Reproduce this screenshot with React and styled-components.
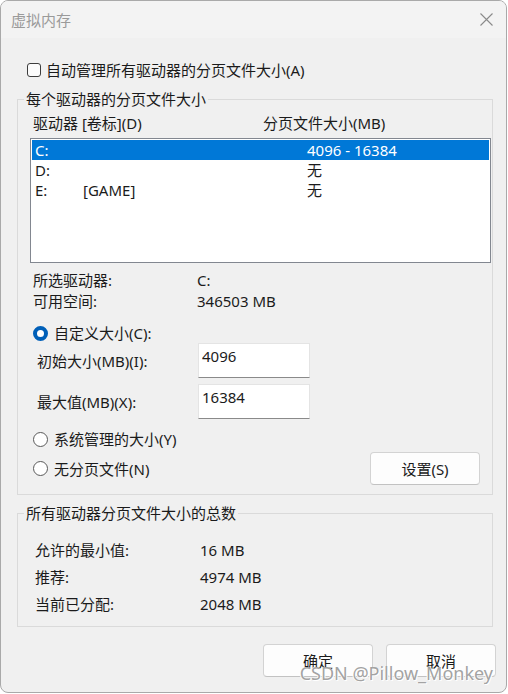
import React, { useState } from "react";
import styled, { createGlobalStyle } from "styled-components";

const GlobalStyle = createGlobalStyle`
  html, body {
    margin: 0;
    padding: 0;
    background: #ffffff;
  }
  body {
    font-family: "Noto Sans", "Noto Sans CJK SC", sans-serif;
    font-size: 15px;
    color: #1b1b1b;
  }
`;

const Window = styled.div`
  position: relative;
  box-sizing: border-box;
  width: 507px;
  height: 693px;
  border: 1px solid #a9a9a9;
  border-radius: 8px;
  background: #f0f0f0;
  overflow: hidden;
`;

const TitleBar = styled.div`
  height: 37px;
  display: flex;
  align-items: center;
  justify-content: space-between;
  padding: 0 13px 0 10px;
  background: #f3f3f3;
  color: #9a9a9a;
  line-height: 20px;
`;

const Body = styled.div`
  padding: 0 13px 0 16px;
`;

const CheckRow = styled.label`
  display: flex;
  align-items: center;
  gap: 5px;
  height: 20px;
  margin-top: 22px;
  padding-left: 10px;
  line-height: 20px;
`;

const CheckBox = styled.span`
  box-sizing: border-box;
  width: 14px;
  height: 14px;
  border: 1px solid #3c3c3c;
  border-radius: 3px;
  background: #fbfbfb;
`;

const Group = styled.fieldset`
  margin: ${(p) => p.$top}px 0 0 0;
  padding: 0 0 ${(p) => p.$bottom}px 0;
  border: 1px solid #dadada;
  min-width: 0;
`;

const Legend = styled.legend`
  margin-left: 6px;
  padding: 0 2px;
  line-height: 20px;
`;

const HeaderRow = styled.div`
  display: grid;
  grid-template-columns: 230px 1fr;
  height: 20px;
  line-height: 20px;
  margin-top: 4px;
  padding-left: 15px;
`;

const ListBox = styled.div`
  box-sizing: border-box;
  width: 461px;
  height: 125px;
  margin: 5px 0 0 12px;
  padding: 1px;
  border: 1px solid #828790;
  background: #ffffff;
`;

const ListRow = styled.div`
  display: grid;
  grid-template-columns: 48px 224px 1fr;
  height: 20px;
  line-height: 20px;
  padding-left: 3px;
  background: ${(p) => (p.$selected ? "#0078d7" : "transparent")};
  color: ${(p) => (p.$selected ? "#ffffff" : "#1b1b1b")};
`;

const InfoRow = styled.div`
  display: grid;
  grid-template-columns: ${(p) => p.$label}px 1fr;
  height: ${(p) => p.$h || 20}px;
  align-items: center;
  line-height: 20px;
  padding-left: ${(p) => p.$indent}px;
  margin-top: ${(p) => p.$top || 0}px;
`;

const RadioRow = styled.div`
  display: flex;
  align-items: center;
  justify-content: space-between;
  height: ${(p) => p.$h || 20}px;
  margin-top: ${(p) => p.$top || 0}px;
  padding: 0 12px 0 15px;
  line-height: 20px;
`;

const RadioLabel = styled.label`
  display: flex;
  align-items: center;
  gap: 6px;
`;

const Radio = styled.span`
  box-sizing: border-box;
  width: 15px;
  height: 15px;
  border-radius: 50%;
  border: ${(p) => (p.$on ? "4px solid #005fb8" : "1px solid #5a5a5a")};
  background: #ffffff;
`;

const FieldRow = styled.div`
  display: grid;
  grid-template-columns: 161px 112px;
  align-items: center;
  height: 35px;
  margin-top: ${(p) => p.$top || 0}px;
  padding-left: 19px;
  line-height: 20px;
`;

const Input = styled.input`
  box-sizing: border-box;
  width: 112px;
  height: 35px;
  padding: 0 3px 10px;
  border: 1px solid #e4e4e4;
  border-bottom-color: #8a8a8a;
  background: #ffffff;
  font: inherit;
  color: #1b1b1b;
  line-height: 20px;
  outline: none;
`;

const Button = styled.button`
  box-sizing: border-box;
  width: ${(p) => p.$w || 110}px;
  height: 33px;
  border: 1px solid #d3d3d3;
  border-bottom-color: #c2c2c2;
  border-radius: 4px;
  background: #fdfdfd;
  font: inherit;
  color: #1b1b1b;
  line-height: 20px;
  padding: 0;
`;

const Footer = styled.div`
  display: flex;
  justify-content: flex-end;
  gap: 13px;
  margin: 17px -3px 0 0;
`;

const Watermark = styled.div`
  position: absolute;
  right: 13px;
  bottom: 7px;
  font-family: "Noto Sans", sans-serif;
  font-size: 18px;
  line-height: 24px;
  color: #a3a3a3;
  text-shadow: 1px 1px 0 #ffffff, -1px 0 0 #ffffff;
  pointer-events: none;
`;

const CloseIcon = () => (
  <svg width="13" height="13" viewBox="0 0 13 13">
    <path d="M0.5 0.5 L12.5 12.5 M12.5 0.5 L0.5 12.5" stroke="#8a8a8a" strokeWidth="1.1" />
  </svg>
);

const drives = [
  { drive: "C:", label: "", size: "4096 - 16384" },
  { drive: "D:", label: "", size: "无" },
  { drive: "E:", label: "[GAME]", size: "无" },
];

export default function App() {
  const [selected] = useState(0);

  return (
    <>
      <GlobalStyle />
      <Window>
        <TitleBar>
          <span>虚拟内存</span>
          <CloseIcon />
        </TitleBar>
        <Body>
          <CheckRow>
            <CheckBox />
            <span>自动管理所有驱动器的分页文件大小(A)</span>
          </CheckRow>

          <Group $top={9} $bottom={9}>
            <Legend>每个驱动器的分页文件大小</Legend>
            <HeaderRow>
              <span>驱动器 [卷标](D)</span>
              <span>分页文件大小(MB)</span>
            </HeaderRow>
            <ListBox>
              {drives.map((d, i) => (
                <ListRow key={d.drive} $selected={i === selected}>
                  <span>{d.drive}</span>
                  <span>{d.label}</span>
                  <span>{d.size}</span>
                </ListRow>
              ))}
            </ListBox>

            <InfoRow $label={164} $indent={15} $top={7}>
              <span>所选驱动器:</span>
              <span>C:</span>
            </InfoRow>
            <InfoRow $label={164} $indent={15} $top={1}>
              <span>可用空间:</span>
              <span>346503 MB</span>
            </InfoRow>

            <RadioRow $top={12}>
              <RadioLabel>
                <Radio $on />
                <span>自定义大小(C):</span>
              </RadioLabel>
            </RadioRow>
            <FieldRow>
              <span>初始大小(MB)(I):</span>
              <Input defaultValue="4096" />
            </FieldRow>
            <FieldRow $top={6}>
              <span>最大值(MB)(X):</span>
              <Input defaultValue="16384" />
            </FieldRow>
            <RadioRow $top={10}>
              <RadioLabel>
                <Radio />
                <span>系统管理的大小(Y)</span>
              </RadioLabel>
            </RadioRow>
            <RadioRow $top={3} $h={33}>
              <RadioLabel>
                <Radio />
                <span>无分页文件(N)</span>
              </RadioLabel>
              <Button>设置(S)</Button>
            </RadioRow>
          </Group>

          <Group $top={8} $bottom={9}>
            <Legend>所有驱动器分页文件大小的总数</Legend>
            <InfoRow $label={165} $indent={17} $top={13} $h={27}>
              <span>允许的最小值:</span>
              <span>16 MB</span>
            </InfoRow>
            <InfoRow $label={165} $indent={17} $h={27}>
              <span>推荐:</span>
              <span>4974 MB</span>
            </InfoRow>
            <InfoRow $label={165} $indent={17} $h={27}>
              <span>当前已分配:</span>
              <span>2048 MB</span>
            </InfoRow>
          </Group>

          <Footer>
            <Button>确定</Button>
            <Button>取消</Button>
          </Footer>
        </Body>
        <Watermark>CSDN @Pillow_Monkey</Watermark>
      </Window>
    </>
  );
}
